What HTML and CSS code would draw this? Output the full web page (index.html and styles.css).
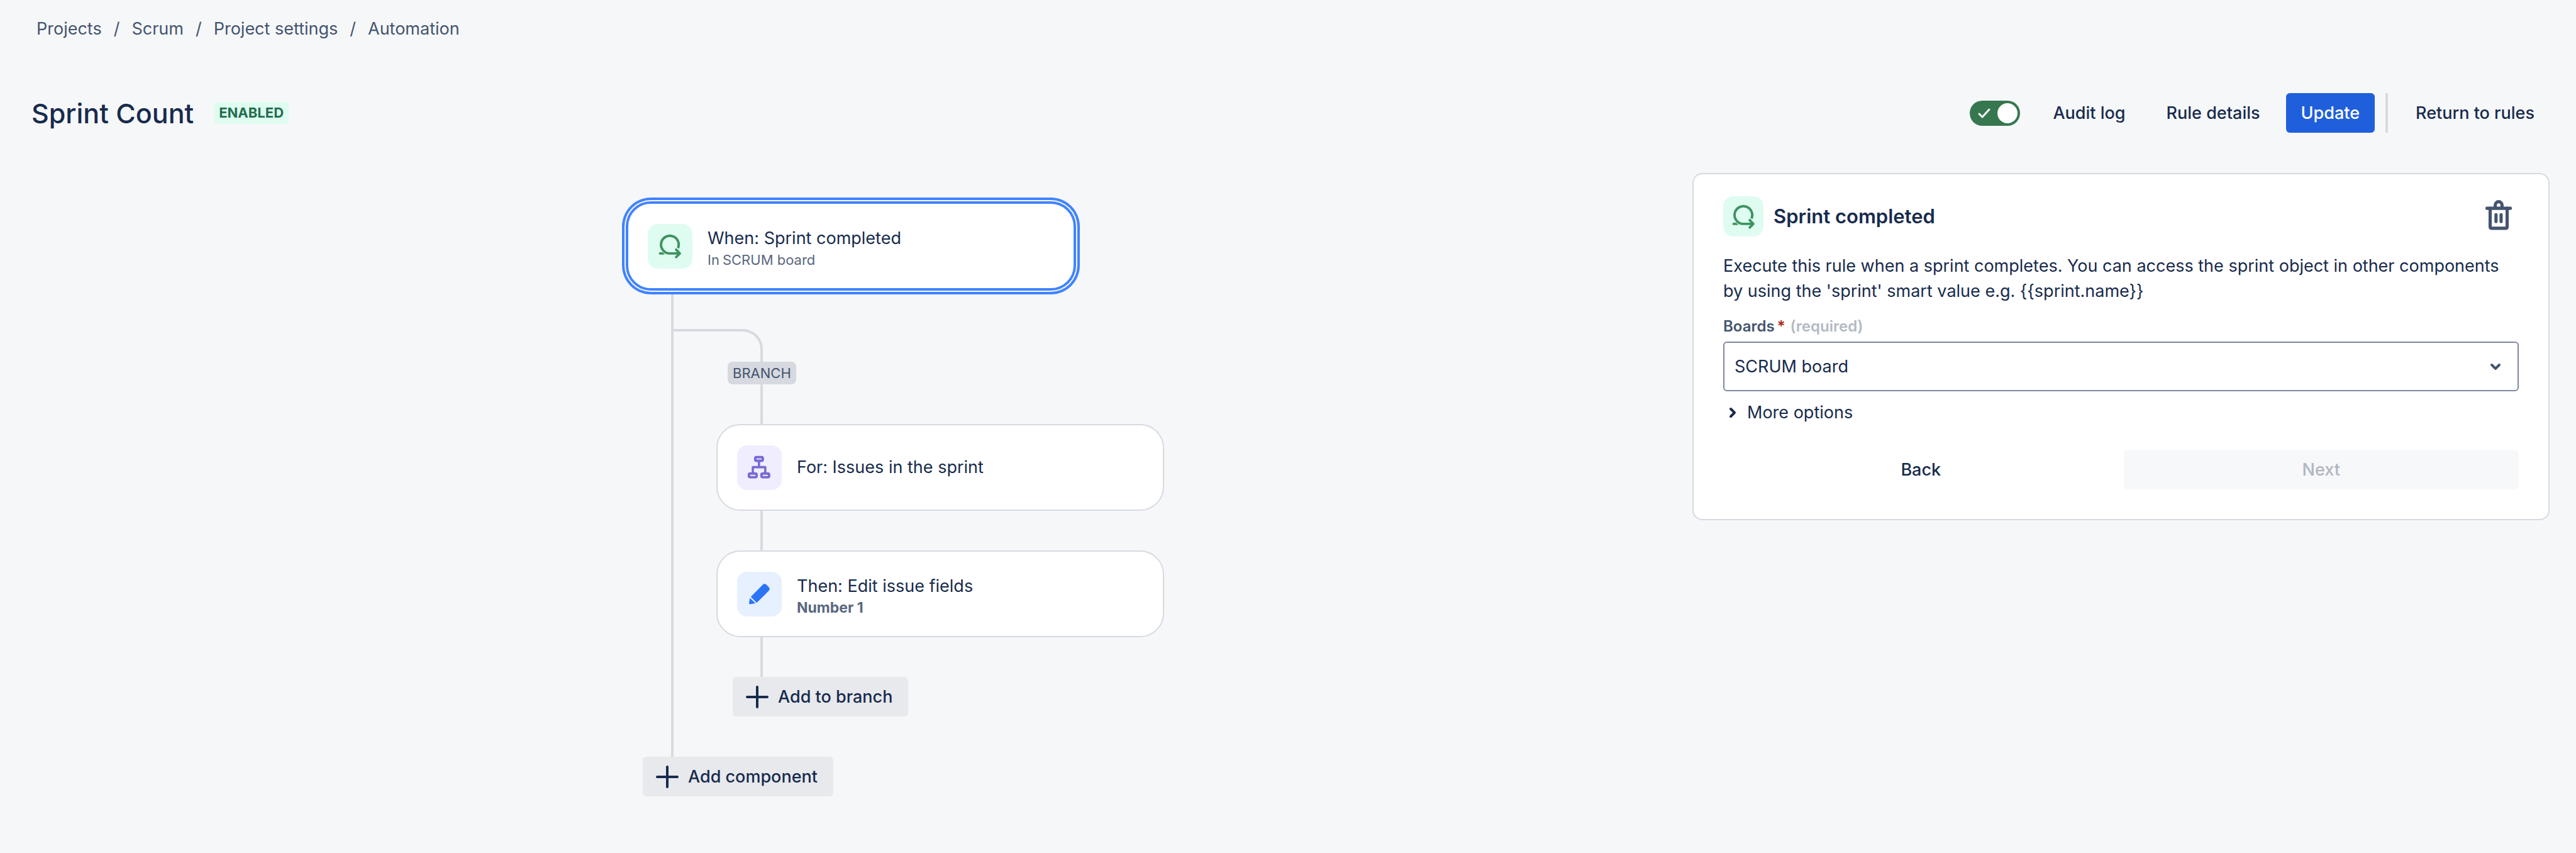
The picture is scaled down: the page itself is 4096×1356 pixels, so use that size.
FILE: index.html
```html
<!DOCTYPE html>
<html lang="en">
<head>
  <meta charset="UTF-8" />
  <meta name="viewport" content="width=device-width, initial-scale=1.0"/>
  <title>Sprint Count - Automation</title>
  <link rel="stylesheet" href="styles.css">
</head>
<body>
  <svg class="sprite" aria-hidden="true">
    <symbol id="icon-sprint" viewBox="16 16 48 48">
      <g fill="none" stroke="currentColor" stroke-width="4.4">
        <path d="M54 43.2A15.7 15.7 0 1 0 39.3 52.7H56"/>
        <path d="M50.8 46L57.2 52.7L50.8 59.2" stroke-linecap="round" stroke-linejoin="round"/>
      </g>
      <path d="M22.2 50.5H27L30.6 54.9H22.2A2.2 2.2 0 0 1 22.2 50.5Z" fill="currentColor"/>
    </symbol>
  </svg>

  <nav class="breadcrumbs" aria-label="Breadcrumbs">
    <a href="#">Projects</a>
    <span>/</span>
    <a href="#">Scrum</a>
    <span>/</span>
    <a href="#">Project settings</a>
    <span>/</span>
    <a href="#">Automation</a>
  </nav>

  <header class="header">
    <h1>Sprint Count</h1>
    <span class="badge">ENABLED</span>
    <div class="actions">
      <label class="toggle">
        <input type="checkbox" aria-label="Rule enabled" checked>
        <svg class="toggle-check" viewBox="0 0 20 16" aria-hidden="true"><path d="M2 9L7 14L18 2" fill="none" stroke="currentColor" stroke-width="3" stroke-linecap="round" stroke-linejoin="round"/></svg>
      </label>
      <button class="btn" type="button">Audit log</button>
      <button class="btn" type="button">Rule details</button>
      <button class="btn btn-primary" type="button">Update</button>
      <span class="divider"></span>
      <button class="btn" type="button">Return to rules</button>
    </div>
  </header>

  <main class="main">
    <section class="canvas">
      <div class="tree">
        <div class="node selected">
          <span class="tile green"><svg class="icon" aria-hidden="true"><use href="#icon-sprint"/></svg></span>
          <div class="node-text two-line">
            <div>When: Sprint completed</div>
            <div class="sub"><span class="sub-prefix">In</span>SCRUM board</div>
          </div>
        </div>

        <div class="trunk">
          <div class="corner"></div>
          <div class="branch-label">BRANCH</div>
          <div class="connector"></div>
          <div class="node">
            <span class="tile purple">
              <svg class="icon" viewBox="16 16 48 48" aria-hidden="true">
                <g fill="none" stroke="currentColor">
                  <g stroke-width="4.4">
                    <rect x="32.6" y="21.2" width="13.4" height="6.6" rx="2.4"/>
                    <rect x="21.4" y="50.3" width="13.6" height="6.6" rx="2.4"/>
                    <rect x="43.6" y="50.3" width="13.6" height="6.6" rx="2.4"/>
                  </g>
                  <path d="M39.3 29V39M28.3 49V39H50.4V49" stroke-width="4" stroke-linejoin="round"/>
                </g>
              </svg>
            </span>
            <div class="node-text">For: Issues in the sprint</div>
          </div>
          <div class="connector"></div>
          <div class="node">
            <span class="tile blue">
              <svg class="icon" viewBox="16 16 48 48" aria-hidden="true">
                <path fill="currentColor" d="M24.7 44.8L45.7 23.4C47.6 21.4 50.2 21.2 52.2 23L56.8 27.6C58.6 29.6 58.6 32 56.6 34L35.2 55.4Z"/>
                <path fill="currentColor" d="M23.2 46.8L33 56.3L23.5 57.9Q21.3 58 21.7 56Z"/>
              </svg>
            </span>
            <div class="node-text two-line">
              <div>Then: Edit issue fields</div>
              <div class="sub"><b>Number 1</b></div>
            </div>
          </div>
          <div class="connector"></div>
          <button class="btn btn-add" type="button">
            <svg class="plus" viewBox="0 0 36 36" aria-hidden="true"><path d="M18 2V34M2 18H34" stroke="currentColor" stroke-width="4" stroke-linecap="round"/></svg>
            Add to branch
          </button>
        </div>

        <button class="btn btn-add add-component" type="button">
          <svg class="plus" viewBox="0 0 36 36" aria-hidden="true"><path d="M18 2V34M2 18H34" stroke="currentColor" stroke-width="4" stroke-linecap="round"/></svg>
          Add component
        </button>
      </div>
    </section>

    <aside class="panel">
      <div class="panel-header">
        <span class="tile tile-small green"><svg class="icon" aria-hidden="true"><use href="#icon-sprint"/></svg></span>
        <h2>Sprint completed</h2>
        <button class="btn-delete" type="button" aria-label="Delete component">
          <svg viewBox="122 76 160 160" aria-hidden="true">
            <g fill="none" stroke="currentColor" stroke-width="17" stroke-linecap="round">
              <path d="M140 113H264"/>
              <path d="M157 113V210Q157 219 166 219H238Q247 219 247 210V113"/>
              <path d="M184 110V96A18 18 0 0 1 220 96V110"/>
              <path d="M188 147V183M215 147V183"/>
            </g>
          </svg>
        </button>
      </div>

      <p>Execute this rule when a sprint completes. You can access the sprint object in other components by using the 'sprint' smart value e.g. {{sprint.name}}</p>

      <label class="field-label" for="boards">Boards<span class="asterisk">*</span><span class="required">(required)</span></label>
      <div class="select">
        <select id="boards">
          <option>SCRUM board</option>
        </select>
        <svg class="select-arrow" viewBox="0 0 18 12" aria-hidden="true"><path d="M3 3L9 9L15 3" fill="none" stroke="currentColor" stroke-width="4" stroke-linecap="round" stroke-linejoin="round"/></svg>
      </div>

      <button class="more" type="button">
        <svg viewBox="0 0 12 18" aria-hidden="true"><path d="M3 3L9 9L3 15" fill="none" stroke="currentColor" stroke-width="4" stroke-linecap="round" stroke-linejoin="round"/></svg>
        More options
      </button>

      <div class="panel-footer">
        <button class="btn" type="button">Back</button>
        <button class="btn" type="button" disabled>Next</button>
      </div>
    </aside>
  </main>
</body>
</html>
```

FILE: styles.css
```css
* { box-sizing: border-box; margin: 0; padding: 0; }
body { font-family: Inter, "Liberation Sans", sans-serif; font-size: 27px; line-height: 40px; color: #172b4d; background-color: #f6f7f9; }
button, select { font: inherit; color: inherit; border: none; background: none; }
button { cursor: pointer; }
svg { display: block; flex-shrink: 0; overflow: visible; }
.sprite { position: absolute; width: 0; height: 0; }

.breadcrumbs { display: flex; gap: 19px; padding: 26px 58px 0; color: #44546f; }
.breadcrumbs a { color: inherit; text-decoration: none; }

.header { display: flex; align-items: center; padding: 82px 42px 0 50px; }
h1 { font-size: 43px; font-weight: 500; line-height: 56px; }
.badge { margin-left: 32px; padding: 0 8px; border-radius: 6px; background-color: #dffcf0; color: #216e4e; font-size: 22px; font-weight: 700; line-height: 35px; }
.actions { display: flex; align-items: center; margin-left: auto; }
.btn { display: flex; align-items: center; justify-content: center; height: 63px; padding: 0 24px; border-radius: 6px; font-weight: 500; white-space: nowrap; }
.actions .btn + .btn { margin-left: 17px; }
.btn-primary { background-color: #1f5fdc; color: white; }
.divider { width: 4px; height: 63px; margin: 0 20px 0 17px; background-color: #d7dae0; }

.toggle { position: relative; margin-right: 28px; color: white; }
.toggle input { display: block; width: 80px; height: 40px; border-radius: 20px; background-color: #5e6c84; appearance: none; overflow: hidden; cursor: pointer; }
.toggle input:checked { background-color: #367750; }
.toggle input::before { content: ""; display: block; width: 32px; height: 32px; margin: 4px; border-radius: 50%; background-color: white; }
.toggle input:checked::before { margin-left: 44px; }
.toggle-check { position: absolute; left: 13px; top: 12px; width: 20px; height: 16px; }

.main { display: grid; grid-template-columns: 21fr 11fr; column-gap: 37px; align-items: start; padding: 64px 42px 90px 52px; }
.canvas { display: flex; justify-content: center; padding-top: 47px; }
.tree { width: 712px; }
.node { display: flex; align-items: center; gap: 24px; width: 712px; height: 138px; padding: 0 31px; border: 2px solid #d8dae1; border-radius: 38px; background-color: white; }
.node.selected { position: relative; border-color: #4083ff; box-shadow: 0 0 0 2px #4083ff, 0 0 0 4px #f6f7f9, 0 0 0 8px #4083ff; }
.node-text { line-height: 36px; }
.two-line { padding-top: 7px; }
.sub { color: #596780; font-size: 22px; line-height: 32px; }
.sub b { font-size: 23px; }
.sub-prefix { margin-right: 5px; }
.tile { display: flex; align-items: center; justify-content: center; flex-shrink: 0; width: 71px; height: 71px; border-radius: 16px; }
.tile-small { width: 64px; height: 64px; }
.icon { width: 43px; height: 43px; }
.green { background-color: #dffcf0; color: #3f9362; }
.purple { background-color: #f0edff; color: #776bd2; }
.blue { background-color: #e6f0ff; color: #2c74f6; }

/* connector lines */
.trunk { margin-left: 70px; padding: 63px 0 64px; border-left: 4px solid #d8dae1; }
.corner { width: 142px; height: 52px; border-top: 4px solid #d8dae1; border-right: 4px solid #d8dae1; border-top-right-radius: 32px; }
.branch-label { width: fit-content; margin-left: 86px; padding: 0 8px; border-radius: 8px; background-color: #d6d9e0; color: #44546f; font-size: 22px; line-height: 36px; }
.connector { width: 4px; height: 63px; margin-left: 138px; background-color: #d8dae1; }
.trunk .node { margin-left: 68px; }
.btn-add { gap: 15px; padding: 0 25px 0 21px; background-color: #e8e9ed; }
.btn-add .plus { width: 36px; height: 36px; }
.trunk .btn-add { margin-left: 94px; }
.add-component { margin-left: 25px; }

.panel { padding: 35px 47px 47px; border: 2px solid #d6dae0; border-radius: 16px; background-color: white; }
.panel-header { display: flex; align-items: center; gap: 16px; margin-bottom: 27px; }
h2 { font-size: 31px; font-weight: 600; }
.btn-delete { display: flex; align-items: center; justify-content: center; width: 64px; height: 64px; margin-left: auto; color: #44546f; }
.btn-delete svg { width: 48px; height: 48px; }
.field-label { display: block; margin-top: 20px; color: #44546f; font-size: 24px; font-weight: 600; line-height: 32px; }
.asterisk { margin: 0 8px 0 4px; color: #ae2a19; }
.required { color: #b3b9c4; }
.select { position: relative; margin-top: 8px; }
.select select { display: block; width: 100%; height: 79px; padding: 0 16px; border: 2px solid #7d879c; border-radius: 6px; background-color: white; appearance: none; }
.select-arrow { position: absolute; right: 28px; top: 34px; width: 18px; height: 12px; color: #44546f; pointer-events: none; }
.more { display: flex; align-items: center; gap: 17px; margin: 14px 0 39px 9px; }
.more svg { width: 12px; height: 18px; }
.panel-footer { display: grid; grid-template-columns: 1fr 1fr; gap: 8px; }
.btn:disabled { background-color: #f7f8fa; color: #b0b6c1; cursor: default; }
```
